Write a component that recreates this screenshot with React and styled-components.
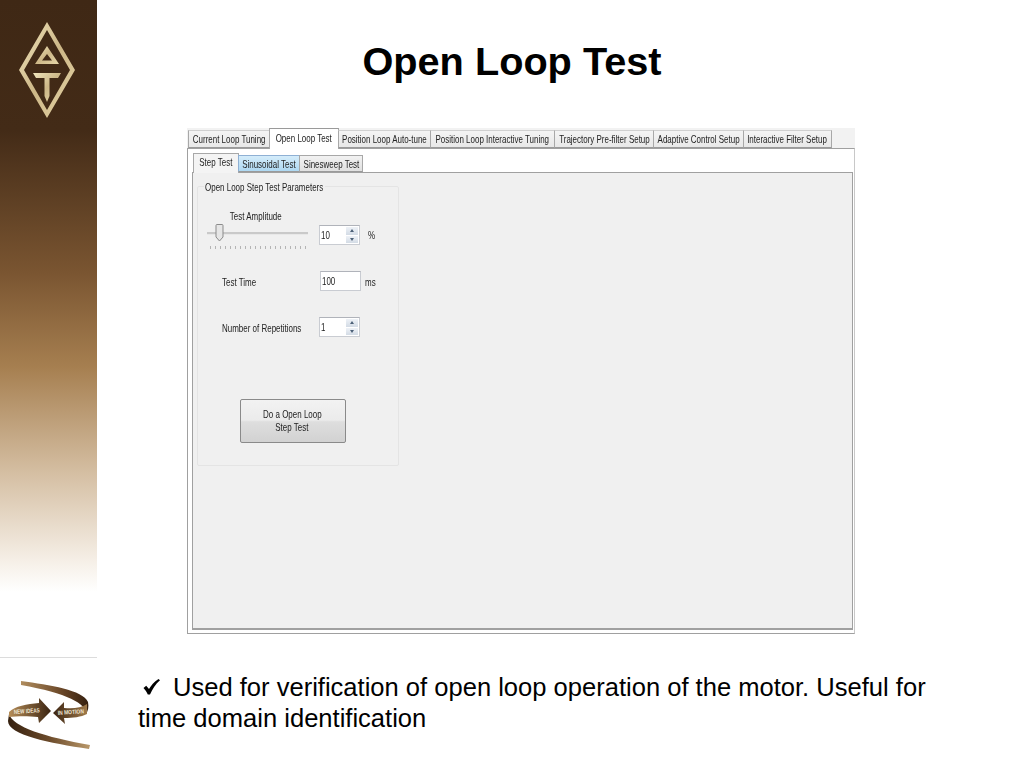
import React from 'react';
import styled, { createGlobalStyle } from 'styled-components';

const GlobalStyle = createGlobalStyle`
  html, body { margin: 0; padding: 0; background: #fff; }
  body { font-family: 'Liberation Sans', Arial, sans-serif; color: #000; }
`;

const Slide = styled.div`
  width: 1024px;
  height: 768px;
  overflow: hidden;
  display: grid;
  grid-template-columns: 97px 1fr;
  grid-template-rows: 657px 111px;
`;

const SideBand = styled.aside`
  background: linear-gradient(180deg, #3f2815 0%, #432b17 22%, #7a5531 46%, #a67f50 62%, #d5bfa3 80%, #f6f0e8 95%, #fff 100%);
  height: 592px;
  padding: 21px 0 0 18px;
  box-sizing: border-box;
`;

const Main = styled.main`
  display: flex;
  flex-direction: column;
`;

const Title = styled.h1`
  margin: 0;
  padding: 39px 97px 0 0;
  height: 128px;
  flex: none;
  box-sizing: border-box;
  text-align: center;
  font-size: 39.7px;
  line-height: 44px;
  font-weight: 700;
`;

const AppWindow = styled.div`
  width: 668px;
  height: 506px;
  margin-left: 90px;
  display: flex;
  flex-direction: column;
  filter: blur(0.4px);
`;

const Squeezed = styled.span`
  display: inline-block;
  white-space: nowrap;
  font-size: 11px;
  color: #222;
  transform: scaleX(${p => p.$x || 0.725});
  transform-origin: ${p => p.$origin || 'center'};
`;

const TabStrip = styled.div`
  height: 20px;
  flex: none;
  display: flex;
  align-items: flex-end;
  background: #f2f2f2;
  padding-left: 1px;
  position: relative;
  z-index: 1;
`;

const Tab = styled.div`
  box-sizing: border-box;
  width: ${p => p.$w}px;
  height: ${p => (p.$active ? 21 : 18)}px;
  margin-bottom: ${p => (p.$active ? -1 : 0)}px;
  display: flex;
  align-items: center;
  justify-content: center;
  background: ${p => (p.$active ? '#fff' : 'linear-gradient(180deg, #f4f4f4, #e8e8e8)')};
  border: 1px solid #a8a8a8;
  border-top-color: ${p => (p.$active ? '#9a9a9a' : '#d0d0d0')};
  border-bottom: ${p => (p.$active ? 'none' : '1px solid #9a9a9a')};
  margin-right: -1px;
  padding-bottom: ${p => (p.$active ? 2 : 0)}px;
`;

const OuterPanel = styled.div`
  flex: 1;
  display: flex;
  flex-direction: column;
  background: #fff;
  border: 1px solid #a0a0a0;
  border-right-color: #c8c8c8;
  padding: 0 1px 3px 4px;
  min-height: 0;
`;

const SubTabStrip = styled.div`
  height: 23px;
  flex: none;
  display: flex;
  align-items: flex-end;
  padding-left: 1px;
  position: relative;
  z-index: 1;
`;

const SubTab = styled.div`
  box-sizing: border-box;
  width: ${p => p.$w}px;
  height: ${p => (p.$active ? 20 : 17)}px;
  margin-bottom: ${p => (p.$active ? -1 : 0)}px;
  margin-right: -1px;
  padding-bottom: ${p => (p.$active ? 3 : 0)}px;
  display: flex;
  align-items: center;
  justify-content: center;
  background: ${p => (p.$active ? '#f4f4f4' : p.$hover ? 'linear-gradient(180deg, #d4ecfa, #aed8f2)' : 'linear-gradient(180deg, #f2f2f2, #e0e0e0)')};
  border: 1px solid ${p => (p.$hover ? '#8fb0d4' : '#a8a8a8')};
  border-bottom: ${p => (p.$active ? 'none' : '1px solid #9a9a9a')};
`;

const TabBody = styled.div`
  flex: 1;
  background: #f0f0f0;
  border: 1px solid #a0a0a0;
  border-bottom-width: 2px;
  padding: 6px 0 0 4px;
  min-height: 0;
`;

const GroupBox = styled.fieldset`
  box-sizing: border-box;
  width: 202px;
  height: 287px;
  margin: 0;
  padding: 0 0 0 9px;
  border: 1px solid #e4e4e4;
  border-radius: 2px;
`;

const GroupLegend = styled.legend`
  padding: 0 0 0 1px;
  margin-left: -3px;
  height: 14px;
  line-height: 14px;
  width: 120px;
  white-space: nowrap;
`;

const AmplitudeRow = styled.div`
  display: flex;
  align-items: flex-start;
  margin-top: 14px;
`;

const SliderBlock = styled.div`
  width: 101px;
  margin-right: 11px;
  display: flex;
  flex-direction: column;
  align-items: center;
`;

const SliderLabel = styled.div`
  height: 16px;
  line-height: 16px;
  margin: 0 0 0 -4px;
`;

const SliderTrack = styled.div`
  position: relative;
  width: 100%;
  height: 2px;
  margin-top: 9px;
  background: #c9c9c9;
  border-bottom: 1px solid #e8e8e8;
`;

const SliderThumb = styled.svg`
  position: absolute;
  left: 8px;
  top: -8px;
`;

const SliderTicks = styled.div`
  width: 96px;
  height: 3px;
  margin-top: 11px;
  background: repeating-linear-gradient(90deg, #b4b4b4 0 1px, transparent 1px 5px);
`;

const SpinGroup = styled.div`
  display: flex;
  align-items: center;
  margin-top: 18px;
`;

const FieldRow = styled.div`
  display: flex;
  align-items: center;
  height: 20px;
  margin-top: ${p => p.$top}px;
  padding-left: 15px;
`;

const FieldLabel = styled.div`
  width: ${p => p.$w}px;
  flex: none;
  height: 16px;
  line-height: 16px;
`;

const InputBox = styled.div`
  box-sizing: border-box;
  width: ${p => p.$w || 41}px;
  height: 20px;
  flex: none;
  background: #fff;
  border: 1px solid #c9ccd2;
  border-top-color: #b0b3ba;
  display: flex;
  align-items: center;
  justify-content: space-between;
  padding-left: 1px;
  overflow: hidden;
`;

const InputValue = styled.div`
  height: 16px;
  line-height: 16px;
  margin-bottom: 3px;
`;

const Spinner = styled.div`
  width: 12px;
  height: 16px;
  margin-right: 1px;
  display: flex;
  flex-direction: column;
  gap: 1px;
`;

const SpinButton = styled.div`
  flex: 1;
  display: flex;
  align-items: center;
  justify-content: center;
  background: linear-gradient(180deg, #eef2f7, #d3dbe5);
  &::after {
    content: '';
    border-left: 2.5px solid transparent;
    border-right: 2.5px solid transparent;
    ${p => (p.$down ? 'border-top: 3px solid #4c6078;' : 'border-bottom: 3px solid #4c6078;')}
  }
`;

const Unit = styled.div`
  margin-left: ${p => p.$gap}px;
  margin-bottom: ${p => p.$lift || 0}px;
  height: 16px;
  line-height: 16px;
`;

const ActionRow = styled.div`
  margin: 62px 0 0 33px;
`;

const ActionButton = styled.button`
  box-sizing: border-box;
  width: 106px;
  height: 44px;
  padding: 0 2px 0 0;
  display: flex;
  flex-direction: column;
  align-items: center;
  justify-content: center;
  line-height: 13px;
  font-family: inherit;
  background: linear-gradient(180deg, #f2f2f2 0%, #ebebeb 48%, #dedede 52%, #d2d2d2 100%);
  border: 1px solid #8a8a8a;
  border-radius: 2px;
`;

const Footer = styled.div`
  grid-column: 1 / 3;
  display: grid;
  grid-template-columns: 97px 1fr;
`;

const FooterBrand = styled.div`
  border-top: 1px solid #dcdcdc;
  height: 110px;
  padding: 19px 0 0 5px;
  box-sizing: border-box;
`;

const Note = styled.p`
  margin: 0;
  padding: 15px 70px 0 41px;
  font-size: 25.55px;
  line-height: 31px;
  color: #000;
`;

const CheckMark = styled.svg`
  margin: 0 13px 0 5px;
  vertical-align: 1px;
`;

const AtLogo = () => (
  <svg width="60" height="100" viewBox="0 0 60 100" aria-hidden="true">
    <defs>
      <linearGradient id="gold" x1="0" y1="0" x2="1" y2="1">
        <stop offset="0" stopColor="#f1e5bd" />
        <stop offset="0.5" stopColor="#cdb787" />
        <stop offset="1" stopColor="#e6d6a8" />
      </linearGradient>
    </defs>
    <path fill="url(#gold)" fillRule="evenodd" d="M29 1 L57 49 L29 97 L1 49 Z M29 9 L6 49 L29 89 L52 49 Z" />
    <path fill="url(#gold)" fillRule="evenodd" d="M29 25 L41 43 L17 43 Z M29 33 L24 39.500 L34 39.500 Z" />
    <path fill="url(#gold)" d="M15 52 L43 52 L40 57 L31.500 57 L31.500 75 L29 81 L26.500 75 L26.500 57 L18 57 Z" />
  </svg>
);

const MotionLogo = () => (
  <svg width="88" height="76" viewBox="0 0 88 76" aria-hidden="true">
    <defs>
      <linearGradient id="ribbonTop" x1="0" y1="0" x2="1" y2="0">
        <stop offset="0" stopColor="#b08d5e" />
        <stop offset="0.6" stopColor="#6a4728" />
        <stop offset="1" stopColor="#35200f" />
      </linearGradient>
      <linearGradient id="ribbonLow" x1="0" y1="0" x2="1" y2="0">
        <stop offset="0" stopColor="#35200f" />
        <stop offset="0.5" stopColor="#6b4a2a" />
        <stop offset="1" stopColor="#b9986a" />
      </linearGradient>
      <linearGradient id="arrowLeft" x1="0" y1="0" x2="1" y2="0">
        <stop offset="0" stopColor="#b58d58" />
        <stop offset="1" stopColor="#3b2412" />
      </linearGradient>
      <linearGradient id="arrowRight" x1="0" y1="0" x2="1" y2="0">
        <stop offset="0" stopColor="#3b2412" />
        <stop offset="1" stopColor="#9f7a4b" />
      </linearGradient>
    </defs>
    <path fill="url(#ribbonTop)" d="M16 4 C45 8 78 13 83 25 C84 30 83 34 81 37 C82 27 62 16 16 8 Z" />
    <path fill="url(#ribbonLow)" d="M4 37 C8 50 40 60 85 68 L84 72 C45 66 3 58 3 44 Z" />
    <path fill="url(#arrowLeft)" d="M4 35 C10 29 22 27 34 26 L34 21 L46 34 L34 46 L33 40 C24 39 12 39 4 40 Z" />
    <path fill="url(#arrowRight)" d="M48 36 L59 25 L59 31 C68 32 76 31 82 27 L82 37 C76 40 68 41 59 41 L60 47 Z" />
    <text x="9" y="37" fontSize="6" fontWeight="700" fill="#f3ead8" fontFamily="'Liberation Sans', sans-serif" textLength="26" lengthAdjust="spacingAndGlyphs" transform="rotate(-4 9 37)">NEW IDEAS</text>
    <text x="53" y="38" fontSize="6" fontWeight="700" fill="#f3ead8" fontFamily="'Liberation Sans', sans-serif" textLength="26" lengthAdjust="spacingAndGlyphs" transform="rotate(-4 53 38)">IN MOTION</text>
  </svg>
);

const topTabs = [
  { label: 'Current Loop Tuning', w: 82 },
  { label: 'Open Loop Test', w: 70, active: true },
  { label: 'Position Loop Auto-tune', w: 93 },
  { label: 'Position Loop Interactive Tuning', w: 125 },
  { label: 'Trajectory Pre-filter Setup', w: 100 },
  { label: 'Adaptive Control Setup', w: 91 },
  { label: 'Interactive Filter Setup', w: 89 },
];

const subTabs = [
  { label: 'Step Test', w: 46, active: true },
  { label: 'Sinusoidal Test', w: 62, hover: true },
  { label: 'Sinesweep Test', w: 64 },
];

const SpinField = ({ value }) => (
  <InputBox>
    <InputValue><Squeezed $origin="left">{value}</Squeezed></InputValue>
    <Spinner>
      <SpinButton />
      <SpinButton $down />
    </Spinner>
  </InputBox>
);

const App = () => (
  <Slide>
    <GlobalStyle />
    <SideBand>
      <AtLogo />
    </SideBand>
    <Main>
      <Title>Open Loop Test</Title>
      <AppWindow>
        <TabStrip>
          {topTabs.map(tab => (
            <Tab key={tab.label} $w={tab.w} $active={tab.active}>
              <Squeezed>{tab.label}</Squeezed>
            </Tab>
          ))}
        </TabStrip>
        <OuterPanel>
          <SubTabStrip>
            {subTabs.map(tab => (
              <SubTab key={tab.label} $w={tab.w} $active={tab.active} $hover={tab.hover}>
                <Squeezed>{tab.label}</Squeezed>
              </SubTab>
            ))}
          </SubTabStrip>
          <TabBody>
            <GroupBox>
              <GroupLegend>
                <Squeezed $origin="left">Open Loop Step Test Parameters</Squeezed>
              </GroupLegend>
              <AmplitudeRow>
                <SliderBlock>
                  <SliderLabel><Squeezed>Test Amplitude</Squeezed></SliderLabel>
                  <SliderTrack>
                    <SliderThumb width="9" height="18" viewBox="0 0 9 18">
                      <path d="M1 1.500 Q1 .5 2 .5 L7 .5 Q8 .5 8 1.500 L8 13 L4.500 17 L1 13 Z" fill="#e6e6e6" stroke="#8b8b8b" />
                    </SliderThumb>
                  </SliderTrack>
                  <SliderTicks />
                </SliderBlock>
                <SpinGroup>
                  <SpinField value="10" />
                  <Unit $gap={8} $lift={3}><Squeezed $origin="left">%</Squeezed></Unit>
                </SpinGroup>
              </AmplitudeRow>
              <FieldRow $top={22}>
                <FieldLabel $w={98}><Squeezed $origin="left">Test Time</Squeezed></FieldLabel>
                <InputBox><InputValue><Squeezed $origin="left">100</Squeezed></InputValue></InputBox>
                <Unit $gap={4}><Squeezed $origin="left">ms</Squeezed></Unit>
              </FieldRow>
              <FieldRow $top={26}>
                <FieldLabel $w={97}><Squeezed $origin="left">Number of Repetitions</Squeezed></FieldLabel>
                <SpinField value="1" />
              </FieldRow>
              <ActionRow>
                <ActionButton>
                  <Squeezed>Do a Open Loop</Squeezed>
                  <Squeezed>Step Test</Squeezed>
                </ActionButton>
              </ActionRow>
            </GroupBox>
          </TabBody>
        </OuterPanel>
      </AppWindow>
    </Main>
    <Footer>
      <FooterBrand>
        <MotionLogo />
      </FooterBrand>
      <Note>
        <CheckMark width="17" height="16" viewBox="0 0 17 16" aria-hidden="true">
          <path d="M0.500 9 L3.200 6.800 L6 10 C8 6.500 11 3 15.500 0 L17 1.200 C12.500 5 9.500 9.800 7 15.500 L4.800 15.500 C3.800 13 2.200 10.800 0.500 9 Z" fill="#000" />
        </CheckMark>
        Used for verification of open loop operation of the motor. Useful for time domain identification
      </Note>
    </Footer>
  </Slide>
);

export default App;
